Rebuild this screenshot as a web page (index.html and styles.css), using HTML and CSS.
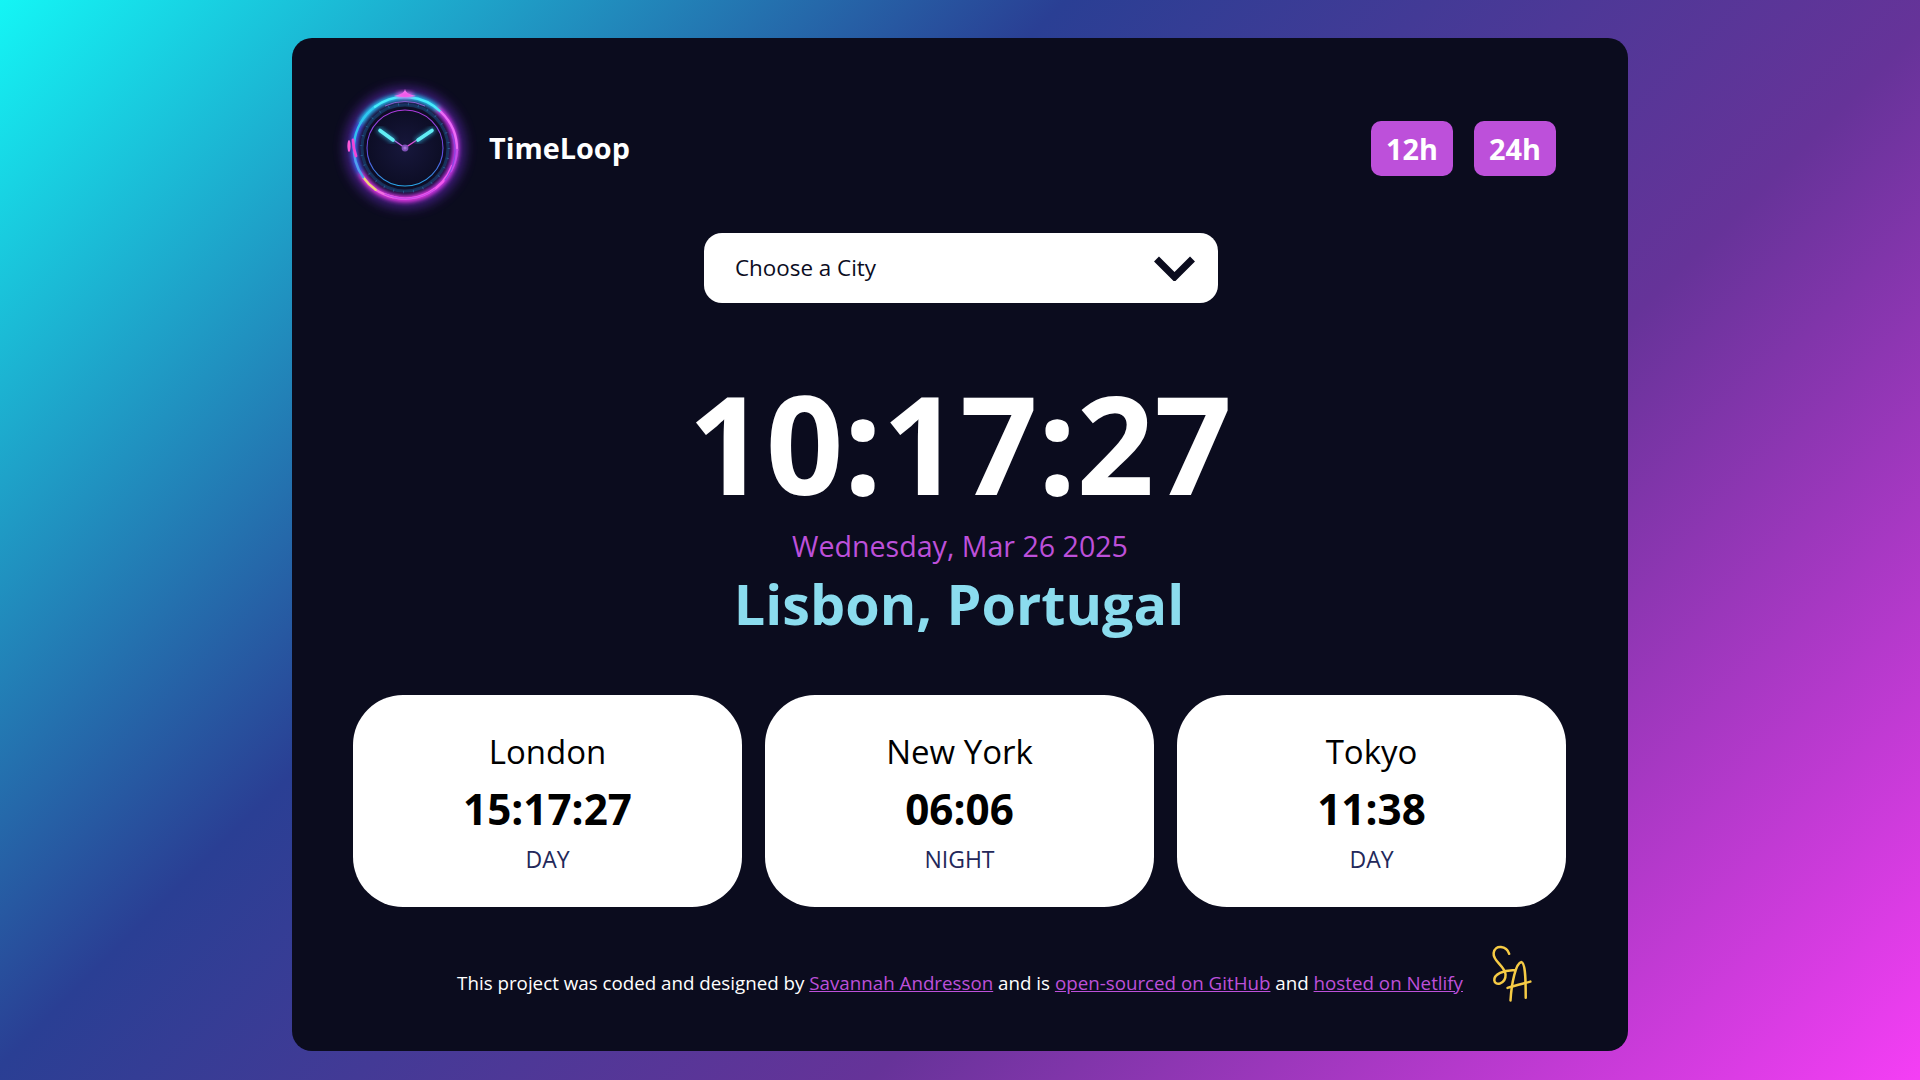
FILE: index.html
```html
<!DOCTYPE html>
<html lang="en">
<head>
  <meta charset="UTF-8" />
  <title>TimeLoop</title>
  <link rel="stylesheet" href="styles.css">
</head>
<body>
  <div class="container">
    <div class="header">
      <div class="brand">
        <svg class="logo" viewBox="-70 -70 140 140" aria-label="TimeLoop logo">
          <defs>
            <filter id="wide" x="-40%" y="-40%" width="180%" height="180%"><feGaussianBlur stdDeviation="6" /></filter>
            <filter id="glow" x="-40%" y="-40%" width="180%" height="180%"><feGaussianBlur stdDeviation="2.2" /></filter>
            <filter id="soft" x="-40%" y="-40%" width="180%" height="180%"><feGaussianBlur stdDeviation="0.6" /></filter>
            <radialGradient id="face">
              <stop offset="0" stop-color="#17173c" />
              <stop offset="1" stop-color="#0c0d24" />
            </radialGradient>
            <linearGradient id="inner" x1="0.5" y1="0" x2="0.5" y2="1">
              <stop offset="0" stop-color="#b03be0" />
              <stop offset="0.6" stop-color="#5a4fe0" />
              <stop offset="1" stop-color="#28a8e8" />
            </linearGradient>
          </defs>

          <!-- outer halo -->
          <circle r="54" fill="none" stroke="#6a2cc8" stroke-width="12" filter="url(#wide)" opacity="0.6" />
          <circle r="40" fill="url(#face)" />

          <!-- ticks and inner rings -->
          <circle r="43" fill="none" stroke="#18507f" stroke-width="3" opacity="0.55" />
          <circle r="44" fill="none" stroke="#36a8e0" stroke-width="2.5" stroke-dasharray="1 9" opacity="0.35" />
          <circle r="38" fill="none" stroke="url(#inner)" stroke-width="1.1" />
          <path d="M-20 -42 A46 46 0 0 1 20 -42" fill="none" stroke="#d048e0" stroke-width="0.8" />

          <!-- coloured glow under the bright ring -->
          <g fill="none" stroke-width="6" filter="url(#glow)">
            <path d="M-44.2 -25.5 A51 51 0 0 1 39 -32.8" stroke="#20c8f8" />
            <path d="M32.8 -39 A51 51 0 0 1 25.5 44.2" stroke="#d838f0" />
            <path d="M25.5 44.2 A51 51 0 0 1 -44.2 25.5" stroke="#e838e8" />
            <path d="M-44.2 25.5 A51 51 0 0 1 -44.2 -25.5" stroke="#4060f0" />
          </g>

          <!-- bright ring -->
          <g fill="none" stroke-width="2.4" stroke-linecap="round" filter="url(#soft)">
            <path d="M-44.2 -25.5 A51 51 0 0 1 -30 -41.3" stroke="#2fc8f0" />
            <path d="M-30 -41.3 A51 51 0 0 1 36 -36" stroke="#46ecfc" />
            <path d="M36 -36 A52 52 0 0 1 52 2" stroke="#ec6cf6" />
            <path d="M52 2 A51 51 0 0 1 46 23" stroke="#c44be8" />
            <path d="M47 18 A50 50 0 0 1 -12 49" stroke="#f258ee" />
            <path d="M-12 49 A51 51 0 0 1 -29.3 41.8" stroke="#f070e0" />
            <path d="M-29.3 41.8 A51 51 0 0 1 -41.8 29.3" stroke="#f0d27a" />
            <path d="M-41.8 29.3 A51 51 0 0 1 -51 -4" stroke="#4fa0f0" />
            <path d="M-51 -4 A51 51 0 0 1 -44.2 -25.5" stroke="#2fc0f0" />
            <path d="M-49 8 A50 50 0 0 1 -52 -8" stroke="#ef44d8" stroke-width="2.8" />
            <path d="M-20 46 A50 50 0 0 0 30 41" stroke="#c84ce8" stroke-width="1.4" />
            <path d="M40 32 A48 48 0 0 0 47 -14" stroke="#8a48e0" stroke-width="1.2" />
          </g>

          <!-- sparks -->
          <path d="M-11 -52 Q0 -54 0 -59 Q0 -54 11 -52 Q0 -50 -11 -52 Z" fill="#f784f0" filter="url(#soft)" />
          <ellipse cy="-53" rx="9" ry="3" fill="#f050e8" filter="url(#glow)" />
          <ellipse cx="-56" cy="-2" rx="1.6" ry="6" fill="#ff58d8" filter="url(#soft)" />

          <!-- hands -->
          <path d="M-2 -1.5 L-26 -18" stroke="#c05fe4" stroke-width="1.4" />
          <path d="M2 -1.5 L27 -18" stroke="#e44bd6" stroke-width="1.4" />
          <path d="M-25 -17.5 L-12 -8" stroke="#30c0e8" stroke-width="6" stroke-linecap="round" filter="url(#glow)" opacity="0.6" />
          <path d="M27 -17.5 L13 -8" stroke="#30c0e8" stroke-width="6" stroke-linecap="round" filter="url(#glow)" opacity="0.6" />
          <path d="M-25 -17.5 L-12 -8" stroke="#62eef4" stroke-width="3.6" stroke-linecap="round" />
          <path d="M27 -17.5 L13 -8" stroke="#62eef4" stroke-width="3.6" stroke-linecap="round" />
          <circle r="3.4" fill="#8052b8" />
          <circle r="1.6" fill="#a878d8" />
        </svg>
        <span class="brand-name">TimeLoop</span>
      </div>
      <div class="formats">
        <button class="format-btn">12h</button>
        <button class="format-btn">24h</button>
      </div>
    </div>

    <div class="city-select">
      <span class="select-label">Choose a City</span>
      <svg class="chevron" viewBox="0 0 41 26"><path d="M2.5 4 L20.5 22 L38.5 4" fill="none" stroke="#0b0c1e" stroke-width="7" /></svg>
    </div>

    <div class="main-clock">
      <div class="time">10:17:27</div>
      <div class="date">Wednesday, Mar 26 2025</div>
      <div class="place">Lisbon, Portugal</div>
    </div>

    <div class="cities">
      <div class="city-card">
        <div class="city-name">London</div>
        <div class="city-time">15:17:27</div>
        <div class="city-period">DAY</div>
      </div>
      <div class="city-card">
        <div class="city-name">New York</div>
        <div class="city-time">06:06</div>
        <div class="city-period">NIGHT</div>
      </div>
      <div class="city-card">
        <div class="city-name">Tokyo</div>
        <div class="city-time">11:38</div>
        <div class="city-period">DAY</div>
      </div>
    </div>

    <div class="footer">
      <p>This project was coded and designed by <a href="#">Savannah Andresson</a> and is <a href="#">open-sourced on GitHub</a> and <a href="#">hosted on Netlify</a></p>
      <svg class="signature" viewBox="150 70 130 180" aria-label="SA signature">
        <g fill="none" stroke="#f6cb45" stroke-width="7.5" stroke-linecap="round">
          <path d="M208 102 C200 78 165 72 161 100 C158 125 195 138 197 165 C198 192 165 202 163 182 C162 165 190 150 225 152" />
          <path d="M212 243 C215 190 228 130 245 127 C258 130 258 190 258 235" />
          <path d="M203 205 C225 198 250 192 272 186" />
        </g>
      </svg>
    </div>
  </div>
</body>
</html>
```

FILE: styles.css
```css
html, body {
  margin: 0;
  padding: 0;
}

body {
  height: 1080px;
  overflow: hidden;
  box-sizing: border-box;
  padding-top: 38px;
  font-family: "Open Sans", Arial, sans-serif;
  background: linear-gradient(135deg, #14f5f5 0%, #2a3f94 35.5%, #663399 65%, #f53ef5 100%);
}

.container {
  width: 1336px;
  height: 1013px;
  box-sizing: border-box;
  margin: 0 auto;
  padding-top: 40px;
  background-color: #0b0c1e;
  border-radius: 20px;
  color: white;
}

.header {
  display: flex;
  justify-content: space-between;
  align-items: center;
  height: 140px;
  padding: 0 72px 0 43px;
}

.brand {
  display: flex;
  align-items: center;
  gap: 14px;
}

.logo {
  width: 140px;
  height: 140px;
  overflow: visible;
}

.brand-name {
  margin-top: -2px;
  font-size: 28.8px;
  font-weight: 700;
}

.formats {
  display: flex;
  gap: 21px;
}

.format-btn {
  width: 82px;
  height: 55px;
  border: none;
  border-radius: 10px;
  background-color: #bd50da;
  color: white;
  font-family: inherit;
  font-size: 28.8px;
  font-weight: 700;
}

.city-select {
  display: flex;
  justify-content: space-between;
  align-items: center;
  width: 514px;
  height: 70px;
  box-sizing: border-box;
  margin: 15px auto 0;
  padding: 0 23px 0 31px;
  position: relative;
  left: 1px;
  background-color: white;
  border-radius: 18px;
  color: #0b0c1e;
  font-size: 22.4px;
}

.select-label {
  margin-top: -2px;
}

.chevron {
  width: 41px;
  height: 26px;
}

.main-clock {
  margin-top: 56px;
  text-align: center;
}

.time {
  font-size: 136px;
  font-weight: 700;
  line-height: 167px;
}

.date {
  font-size: 28.6px;
  line-height: 39px;
  color: #bd50da;
}

.place {
  padding-right: 2px;
  font-size: 55.7px;
  font-weight: 700;
  line-height: 76px;
  color: #8bdcee;
}

.cities {
  display: flex;
  justify-content: space-between;
  margin-top: 54px;
  padding: 0 62px 0 61px;
}

.city-card {
  width: 389px;
  height: 212px;
  box-sizing: border-box;
  padding-top: 35px;
  background-color: white;
  border-radius: 50px;
  text-align: center;
  color: black;
}

.city-name {
  font-size: 33px;
  line-height: 44px;
}

.city-time {
  margin-top: 10px;
  font-size: 42.2px;
  font-weight: 700;
  line-height: 50px;
}

.city-period {
  margin-top: 10px;
  font-size: 23px;
  line-height: 30px;
  color: #23285a;
}

.footer {
  display: flex;
  justify-content: flex-end;
  align-items: center;
  gap: 27px;
  margin-top: 36px;
  padding-right: 95px;
}

.footer p {
  margin: 18px 0 0;
  font-size: 18.75px;
}

.footer a {
  color: #bd50da;
}

.signature {
  width: 43px;
  height: 60px;
}
```
